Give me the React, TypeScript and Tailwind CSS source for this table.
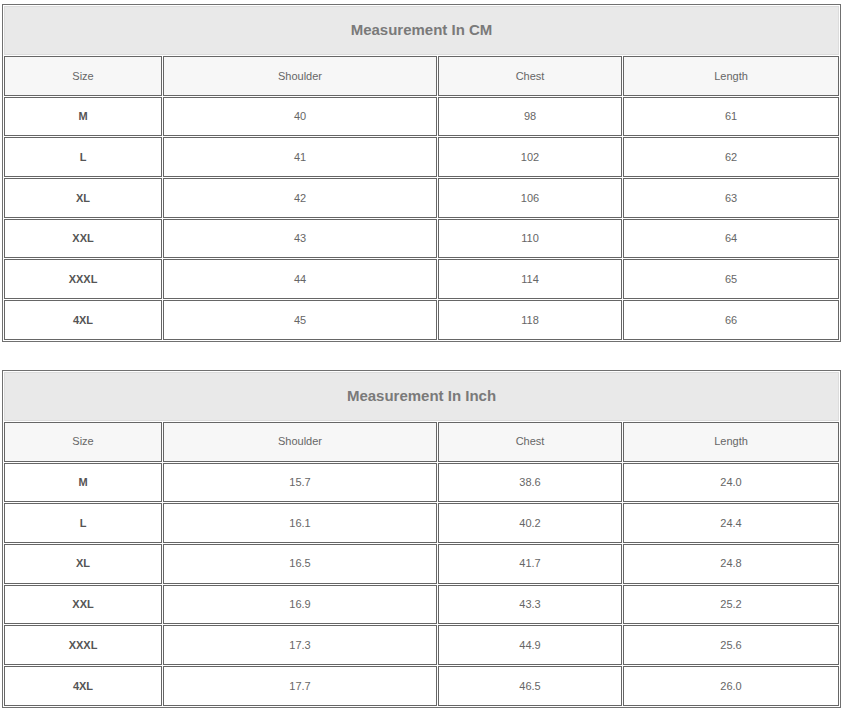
const cols = ["Size", "Shoulder", "Chest", "Length"];
const widths = ["w-[158px]", "w-[274px]", "w-[184px]", "w-[216px]"];

const cmRows = [
  ["M", "40", "98", "61"],
  ["L", "41", "102", "62"],
  ["XL", "42", "106", "63"],
  ["XXL", "43", "110", "64"],
  ["XXXL", "44", "114", "65"],
  ["4XL", "45", "118", "66"],
];

const inchRows = [
  ["M", "15.7", "38.6", "24.0"],
  ["L", "16.1", "40.2", "24.4"],
  ["XL", "16.5", "41.7", "24.8"],
  ["XXL", "16.9", "43.3", "25.2"],
  ["XXXL", "17.3", "44.9", "25.6"],
  ["4XL", "17.7", "46.5", "26.0"],
];

function SizeTable({ title, rows }: { title: string; rows: string[][] }) {
  return (
    <table className="ml-[2px] w-[839px] table-fixed border-separate border-spacing-px border border-[#707070] font-['Liberation_Sans',Arial,sans-serif]">
      <colgroup>
        {widths.map((w) => (
          <col key={w} className={w} />
        ))}
      </colgroup>
      <tbody>
        <tr>
          <td
            colSpan={4}
            className="h-[49px] border border-[#dcdcdc] bg-[#e9e9e9] text-center text-[15px] font-bold text-[#7a7a7a]"
          >
            {title}
          </td>
        </tr>
        <tr>
          {cols.map((c) => (
            <td
              key={c}
              className="h-[39.7px] border border-[#666] bg-[#f7f7f7] text-center text-[11px] text-[#666]"
            >
              {c}
            </td>
          ))}
        </tr>
        {rows.map((r) => (
          <tr key={r[0]}>
            {r.map((v, i) => (
              <td
                key={i}
                className={
                  i === 0
                    ? "h-[39.7px] border border-[#666] bg-white text-center text-[11px] font-bold text-[#555]"
                    : "h-[39.7px] border border-[#666] bg-white text-center text-[11px] text-[#666]"
                }
              >
                {v}
              </td>
            ))}
          </tr>
        ))}
      </tbody>
    </table>
  );
}

export default function App() {
  return (
    <div className="min-h-[714px] w-[844px] bg-white pt-[4px]">
      <SizeTable title="Measurement In CM" rows={cmRows} />
      <div className="h-[28px]" />
      <SizeTable title="Measurement In Inch" rows={inchRows} />
    </div>
  );
}
